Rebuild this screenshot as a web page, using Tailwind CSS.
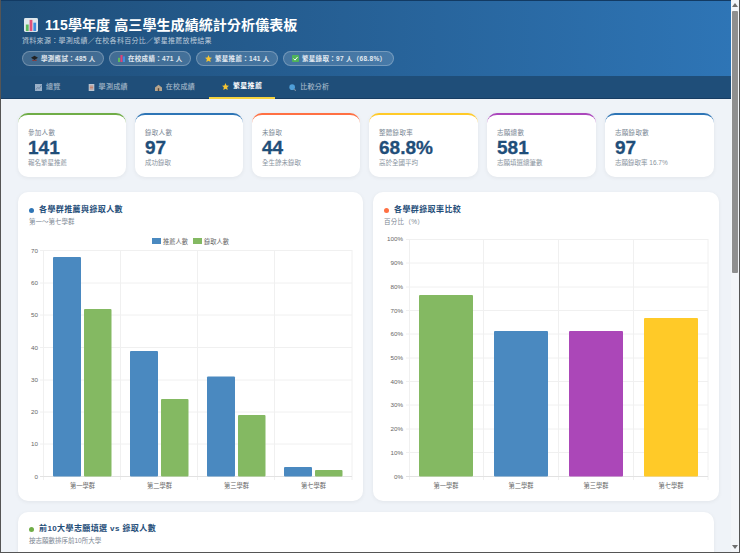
<!DOCTYPE html>
<html lang="zh-Hant">
<head>
<meta charset="UTF-8">
<title>115學年度 高三學生成績統計分析儀表板</title>
<script src="https://cdn.jsdelivr.net/npm/@tailwindcss/browser@4"></script>
</head>
<body class="w-[740px] h-[553px] overflow-hidden bg-[#eff3f8] font-['Liberation_Sans','Noto_Sans_CJK_TC',sans-serif]">
<div class="flex w-[740px] h-[553px] border-l border-b border-r border-[#555] overflow-hidden">
  <div class="w-[730px] shrink-0 overflow-hidden">
    <!-- header -->
    <header class="h-[76px] bg-gradient-to-r from-[#1f4e79] to-[#2e75b6] border-t border-[#123a63] pl-[21px] pt-[15px] text-white">
      <h1 class="flex items-center h-[18px] pl-[2px] text-[14px] font-bold tracking-[0.1px] whitespace-nowrap">
        <svg class="w-[14px] h-[14px] mr-[7px]" viewBox="0 0 15 15"><rect width="15" height="15" rx="1.5" fill="#dfe8ec"/><rect x="2" y="7" width="3" height="7" fill="#5cb85c"/><rect x="6" y="2" width="3" height="12" fill="#e0517a"/><rect x="10" y="5" width="3" height="9" fill="#3d8fe0"/></svg>
        115學年度 高三學生成績統計分析儀表板
      </h1>
      <p class="text-[7px] leading-[13px] text-white/70 tracking-[0.3px] whitespace-nowrap">資料來源：學測成績／在校各科百分比／繁星推薦放榜結果</p>
      <div class="flex gap-[5px] mt-[4px]">
        <span class="flex items-center h-[15px] w-[82px] pl-[8px] rounded-full bg-white/15 border border-white/25 text-[6.5px] font-bold text-white/85 tracking-[0.3px] whitespace-nowrap">
          <svg class="w-[7px] h-[7px] mr-[3px]" viewBox="0 0 10 10"><path d="M5 1 10 4 5 7 0 4Z" fill="#222"/><path d="M2 6v2.5h6V6L5 8Z" fill="#8a3a3a"/></svg>學測應試：485 人</span>
        <span class="flex items-center h-[15px] w-[82px] pl-[8px] rounded-full bg-white/15 border border-white/25 text-[6.5px] font-bold text-white/85 tracking-[0.3px] whitespace-nowrap">
          <svg class="w-[7px] h-[7px] mr-[3px]" viewBox="0 0 10 10"><rect y="4" width="3" height="6" fill="#5cb85c"/><rect x="3.5" width="3" height="10" fill="#e0417a"/><rect x="7" y="2" width="3" height="8" fill="#3d8fe0"/></svg>在校成績：471 人</span>
        <span class="flex items-center h-[15px] w-[82px] pl-[8px] rounded-full bg-white/15 border border-white/25 text-[6.5px] font-bold text-white/85 tracking-[0.3px] whitespace-nowrap">
          <svg class="w-[7px] h-[7px] mr-[3px]" viewBox="0 0 10 10"><path d="M5 0 6.5 3.4 10 3.8 7.4 6.2 8.1 10 5 8.1 1.9 10 2.6 6.2 0 3.8 3.5 3.4Z" fill="#f7c531"/></svg>繁星推薦：141 人</span>
        <span class="flex items-center h-[15px] w-[111px] pl-[8px] rounded-full bg-white/15 border border-white/25 text-[6.5px] font-bold text-white/85 tracking-[0.3px] whitespace-nowrap">
          <svg class="w-[7px] h-[7px] mr-[3px]" viewBox="0 0 10 10"><rect width="10" height="10" rx="1" fill="#4fb35a"/><path d="M2 5 4.3 7.3 8 2.8" fill="none" stroke="#fff" stroke-width="1.4"/></svg>繁星錄取：97 人（68.8%）</span>
      </div>
    </header>
    <!-- tabs -->
    <nav class="flex gap-[1px] h-[23px] pl-[21px] bg-[#1f4e79] border-b border-[#173d63] text-[7px] text-white/65 tracking-[0.3px] whitespace-nowrap">
      <a class="flex items-center gap-[4px] px-[13px]"><svg class="w-[7px] h-[7px] shrink-0" viewBox="0 0 10 10"><rect width="10" height="10" fill="#9ab0c8"/><path d="M1 8 4 5 6 6.500 9 2" fill="none" stroke="#57708f" stroke-width="1"/></svg>總覽</a>
      <a class="flex items-center gap-[4px] px-[13px]"><svg class="w-[7px] h-[7px] shrink-0" viewBox="0 0 10 10"><rect x="1" width="8" height="10" fill="#b9c4d0"/><path d="M2.500 3h5M2.500 5h5M2.500 7h5" stroke="#c96b4a"/></svg>學測成績</a>
      <a class="flex items-center gap-[4px] px-[13px]"><svg class="w-[7px] h-[7px] shrink-0" viewBox="0 0 10 10"><path d="M0 5 5 1 10 5V10H0Z" fill="#b7a48c"/><rect x="4" y="6" width="2" height="4" fill="#5b4a3a"/></svg>在校成績</a>
      <a class="flex items-center gap-[4px] px-[13px] h-[23px] border-b-2 border-[#f5d33f] text-white font-bold"><svg class="w-[7px] h-[7px] shrink-0" viewBox="0 0 10 10"><path d="M5 0 6.500 3.400 10 3.800 7.400 6.200 8.100 10 5 8.100 1.900 10 2.600 6.200 0 3.800 3.500 3.400Z" fill="#f7c531"/></svg>繁星推薦</a>
      <a class="flex items-center gap-[4px] px-[13px]"><svg class="w-[7px] h-[7px] shrink-0" viewBox="0 0 10 10"><circle cx="4.500" cy="4.500" r="4" fill="#4f9fd8"/><path d="M7 7 10 10" stroke="#7a8ca0" stroke-width="1.500"/></svg>比較分析</a>
    </nav>
    <main class="pl-[17px] pt-[14px]">
      <!-- stat cards -->
      <div class="grid grid-cols-[108px_108px_108px_109px_109px_109px] gap-[9px] w-[697px]">
        <div class="h-[64px] pl-[10px] pt-[12px] bg-white rounded-[10px] border-t-2 border-[#70ad47] shadow-[0_1px_4px_rgba(0,0,0,0.06)]">
          <p class="text-[6.5px] leading-[11px] text-[#7a8794] tracking-[0.3px]">參加人數</p>
          <p class="text-[19px] leading-[20px] font-bold text-[#1f4e79] [-webkit-text-stroke:0.3px_#1f4e79]">141</p>
          <p class="text-[6.5px] leading-[10px] text-[#8a94a0]">報名繁星推薦</p>
        </div>
        <div class="h-[64px] pl-[10px] pt-[12px] bg-white rounded-[10px] border-t-2 border-[#2e75b6] shadow-[0_1px_4px_rgba(0,0,0,0.06)]">
          <p class="text-[6.5px] leading-[11px] text-[#7a8794] tracking-[0.3px]">錄取人數</p>
          <p class="text-[19px] leading-[20px] font-bold text-[#1f4e79] [-webkit-text-stroke:0.3px_#1f4e79]">97</p>
          <p class="text-[6.5px] leading-[10px] text-[#8a94a0]">成功錄取</p>
        </div>
        <div class="h-[64px] pl-[10px] pt-[12px] bg-white rounded-[10px] border-t-2 border-[#ff7043] shadow-[0_1px_4px_rgba(0,0,0,0.06)]">
          <p class="text-[6.5px] leading-[11px] text-[#7a8794] tracking-[0.3px]">未錄取</p>
          <p class="text-[19px] leading-[20px] font-bold text-[#1f4e79] [-webkit-text-stroke:0.3px_#1f4e79]">44</p>
          <p class="text-[6.5px] leading-[10px] text-[#8a94a0]">全生餘未錄取</p>
        </div>
        <div class="h-[64px] pl-[10px] pt-[12px] bg-white rounded-[10px] border-t-2 border-[#ffca28] shadow-[0_1px_4px_rgba(0,0,0,0.06)]">
          <p class="text-[6.5px] leading-[11px] text-[#7a8794] tracking-[0.3px]">整體錄取率</p>
          <p class="text-[19px] leading-[20px] font-bold text-[#1f4e79] [-webkit-text-stroke:0.3px_#1f4e79]">68.8%</p>
          <p class="text-[6.5px] leading-[10px] text-[#8a94a0]">高於全國平均</p>
        </div>
        <div class="h-[64px] pl-[10px] pt-[12px] bg-white rounded-[10px] border-t-2 border-[#ab47bc] shadow-[0_1px_4px_rgba(0,0,0,0.06)]">
          <p class="text-[6.5px] leading-[11px] text-[#7a8794] tracking-[0.3px]">志願總數</p>
          <p class="text-[19px] leading-[20px] font-bold text-[#1f4e79] [-webkit-text-stroke:0.3px_#1f4e79]">581</p>
          <p class="text-[6.5px] leading-[10px] text-[#8a94a0]">志願填選總筆數</p>
        </div>
        <div class="h-[64px] pl-[10px] pt-[12px] bg-white rounded-[10px] border-t-2 border-[#2e75b6] shadow-[0_1px_4px_rgba(0,0,0,0.06)]">
          <p class="text-[6.5px] leading-[11px] text-[#7a8794] tracking-[0.3px]">志願錄取數</p>
          <p class="text-[19px] leading-[20px] font-bold text-[#1f4e79] [-webkit-text-stroke:0.3px_#1f4e79]">97</p>
          <p class="text-[6.5px] leading-[10px] text-[#8a94a0]">志願錄取率 16.7%</p>
        </div>
      </div>
      <!-- charts -->
      <div class="grid grid-cols-[345px_346px] gap-[10px] mt-[15px] w-[702px]">
        <section class="h-[309px] bg-white rounded-[10px] shadow-[0_1px_4px_rgba(0,0,0,0.06)] pl-[11px] pt-[12px]">
          <h2 class="flex items-center gap-[5px] text-[8px] leading-[12px] font-bold text-[#1f4e79] tracking-[0.4px]"><i class="w-[5px] h-[5px] rounded-full bg-[#2e75b6]"></i>各學群推薦與錄取人數</h2>
          <p class="text-[6.5px] leading-[11px] text-[#7d8894]">第一～第七學群</p>
          <svg class="block -ml-[11px] mt-[6px]" width="345" height="268" viewBox="18 233 345 268" font-size="6.250" fill="#666" font-family="'Liberation Sans','Noto Sans CJK TC',sans-serif">
            <rect x="152" y="238" width="9" height="6" fill="#4a89c0"/><text x="163" y="243.500">推薦人數</text>
            <rect x="193" y="238" width="9" height="6" fill="#84b962"/><text x="204" y="243.500">錄取人數</text>
            <g stroke="#f0f0f0" stroke-width="1">
              <path d="M40 250.500H352M40 283H352M40 315H352M40 347.500H352M40 380H352M40 412H352M40 444H352"/>
              <path d="M43.500 250V480M120.500 250V480M197.500 250V480M274.500 250V480M352 250V480"/>
              <path d="M40 476.500H352" stroke="#e2e2e2"/>
            </g>
            <g text-anchor="end">
              <text x="38" y="252.500">70</text><text x="38" y="285">60</text><text x="38" y="317">50</text><text x="38" y="349.500">40</text><text x="38" y="382">30</text><text x="38" y="414">20</text><text x="38" y="446">10</text><text x="38" y="478.500">0</text>
            </g>
            <g fill="#4a89c0">
              <rect x="53" y="257" width="28" height="219.500" rx="1"/><rect x="130" y="351" width="28" height="125.500" rx="1"/><rect x="207" y="376.500" width="28" height="100" rx="1"/><rect x="284" y="467" width="28" height="9.500" rx="1"/>
            </g>
            <g fill="#84b962">
              <rect x="84" y="309" width="27.500" height="167.500" rx="1"/><rect x="161" y="399" width="27.500" height="77.500" rx="1"/><rect x="238" y="415" width="27.500" height="61.500" rx="1"/><rect x="315" y="470" width="27.500" height="6.500" rx="1"/>
            </g>
            <g text-anchor="middle">
              <text x="82.500" y="488">第一學群</text><text x="159.500" y="488">第二學群</text><text x="236.500" y="488">第三學群</text><text x="313.500" y="488">第七學群</text>
            </g>
          </svg>
        </section>
        <section class="h-[309px] bg-white rounded-[10px] shadow-[0_1px_4px_rgba(0,0,0,0.06)] pl-[11px] pt-[12px]">
          <h2 class="flex items-center gap-[5px] text-[8px] leading-[12px] font-bold text-[#1f4e79] tracking-[0.4px]"><i class="w-[5px] h-[5px] rounded-full bg-[#ff7043]"></i>各學群錄取率比較</h2>
          <p class="text-[6.5px] leading-[11px] text-[#7d8894] tracking-[0.3px]">百分比（%）</p>
          <svg class="block -ml-[11px] mt-[6px]" width="346" height="268" viewBox="373 233 346 268" font-size="6.250" fill="#666" font-family="'Liberation Sans','Noto Sans CJK TC',sans-serif">
            <g stroke="#f0f0f0" stroke-width="1">
              <path d="M406 239.500H708M406 263H708M406 287H708M406 310.500H708M406 334H708M406 358H708M406 381.500H708M406 405H708M406 429H708M406 452.500H708"/>
              <path d="M409.500 239V480M483.500 239V480M558.500 239V480M633.500 239V480M708 239V480"/>
              <path d="M406 476.500H708" stroke="#e2e2e2"/>
            </g>
            <g text-anchor="end">
              <text x="403" y="241">100%</text><text x="403" y="265">90%</text><text x="403" y="289">80%</text><text x="403" y="312.500">70%</text><text x="403" y="336">60%</text><text x="403" y="360">50%</text><text x="403" y="383.500">40%</text><text x="403" y="407">30%</text><text x="403" y="431">20%</text><text x="403" y="454.500">10%</text><text x="403" y="478.500">0%</text>
            </g>
            <rect x="419" y="295" width="54" height="181.500" rx="1" fill="#84b962"/>
            <rect x="494" y="331" width="54" height="145.500" rx="1" fill="#4a89c0"/>
            <rect x="569" y="331" width="54" height="145.500" rx="1" fill="#ab47b8"/>
            <rect x="644" y="318" width="54" height="158.500" rx="1" fill="#ffca28"/>
            <g text-anchor="middle">
              <text x="446" y="488">第一學群</text><text x="521" y="488">第二學群</text><text x="596" y="488">第三學群</text><text x="671" y="488">第七學群</text>
            </g>
          </svg>
        </section>
      </div>
      <section class="w-[696px] h-[60px] mt-[11px] bg-white rounded-[10px] shadow-[0_1px_4px_rgba(0,0,0,0.06)] pl-[11px] pt-[11px]">
        <h2 class="flex items-center gap-[5px] text-[8px] leading-[12px] font-bold text-[#1f4e79] tracking-[0.4px]"><i class="w-[5px] h-[5px] rounded-full bg-[#70ad47]"></i>前10大學志願填選 vs 錄取人數</h2>
        <p class="text-[6.5px] leading-[11px] text-[#7d8894]">按志願數排序前10所大學</p>
      </section>
    </main>
  </div>
  <!-- scrollbar -->
  <div class="relative w-[8px] shrink-0 bg-[#f4f6f9]">
    <span class="absolute left-[1px] top-[3px] border-x-[3px] border-x-transparent border-b-[4px] border-b-[#6f6f6f]"></span>
    <span class="absolute left-[1px] top-[11px] w-[6px] h-[262px] rounded-[1px] bg-[#8f8f8f]"></span>
    <span class="absolute left-[1px] bottom-[3px] border-x-[3px] border-x-transparent border-t-[4px] border-t-[#6f6f6f]"></span>
  </div>
</div>
</body>
</html>
